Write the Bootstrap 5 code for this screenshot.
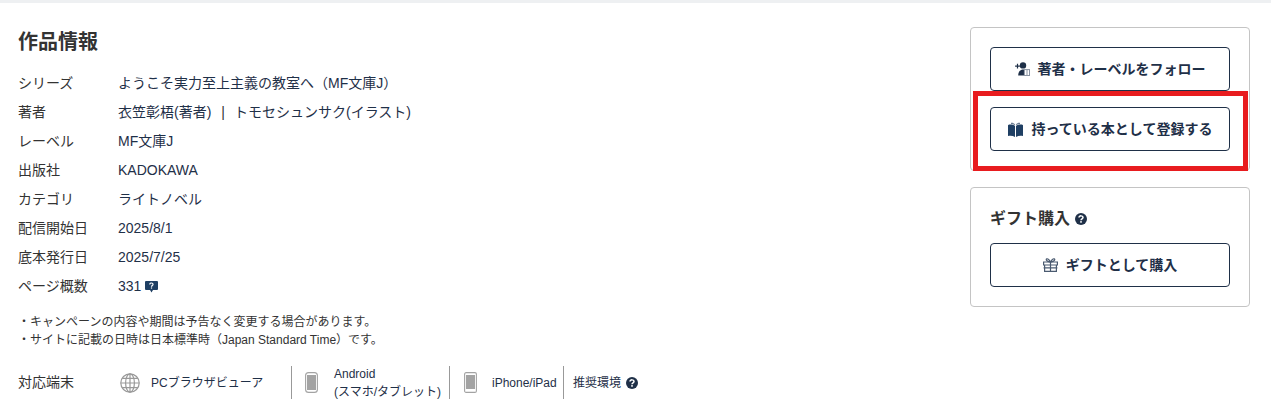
<!DOCTYPE html>
<html lang="ja">
<head>
  <meta charset="UTF-8" />
  <meta name="viewport" content="width=device-width, initial-scale=1" />
  <title>作品情報</title>
  <link href="https://cdn.jsdelivr.net/npm/bootstrap@5.3.0/dist/css/bootstrap.min.css" rel="stylesheet">
  <style>
    body {
      font-family: "Liberation Sans", "Noto Sans CJK JP", sans-serif;
      font-size: 14px;
      color: #333;
      background: #fff;
      overflow: hidden;
    }
    .page-wrap {
      border-top: 3px solid #eef0f2;
      padding: 24px 21px 0 18px;
      gap: 20px;
    }
    .info-col { flex: 1; min-width: 0; padding-top: 1px; }
    .side-col { width: 280px; flex: none; }
    .info-title { font-size: 20px; font-weight: 700; line-height: 28px; margin: 0 0 12.6px; }
    .info-row { height: 29.1px; line-height: 29px; }
    .info-label { width: 100px; flex: none; }
    .info-val, .info-val a { color: #1f3048; text-decoration: none; }
    .info-sep { margin: 0 9px 0 10px; color: #333; }
    .info-notes { font-size: 12px; line-height: 18px; margin: 11.4px 0 0; color: #333; }
    .device-row { margin-top: 17px; height: 34px; }
    .device-item { font-size: 12px; color: #1f3048; line-height: 18px; height: 33px; }
    .device-item.ruled { border-right: 1px solid #999; }
    .device-pc { width: 174px; }
    .device-pc svg { margin: 0 11px 0 2px; }
    .device-android { width: 158px; padding-left: 13px; }
    .device-android svg { margin-right: 16px; }
    .device-ios { width: 114px; padding-left: 14px; }
    .device-ios svg { margin-right: 15px; }
    .device-env { padding-left: 9px; font-size: 12px; color: #1f3048; }
    .help-dot { margin-left: 5px; }
    .side-box {
      border: 1px solid #c4c4c4;
      border-radius: 4px;
      padding: 19px;
    }
    .side-box + .side-box { margin-top: 16px; }
    .side-btn {
      height: 44px;
      width: 100%;
      border: 1px solid #1f3048;
      border-radius: 4px;
      color: #1f3048;
      font-size: 14px;
      font-weight: 700;
      gap: 8px;
      padding: 0;
    }
    .side-btn + .side-btn { margin-top: 16px; gap: 9px; }
    .gift-title { font-size: 16px; font-weight: 700; color: #333; line-height: 22px; margin: 1px 0 13px; }
    .gift-btn { gap: 8px; }
    .mark-box {
      position: absolute;
      left: 973px;
      top: 91px;
      width: 275px;
      height: 80px;
      border: 5px solid #e81c1f;
      pointer-events: none;
    }
  </style>
</head>
<body>
  <div class="page-wrap d-flex align-items-start">
    <div class="info-col">
      <h2 class="info-title">作品情報</h2>
      <div class="info-row d-flex"><div class="info-label">シリーズ</div><div class="info-val"><a href="#">ようこそ実力至上主義の教室へ（MF文庫J）</a></div></div>
      <div class="info-row d-flex"><div class="info-label">著者</div><div class="info-val"><a href="#">衣笠彰梧(著者)</a><span class="info-sep">|</span><a href="#">トモセシュンサク(イラスト)</a></div></div>
      <div class="info-row d-flex"><div class="info-label">レーベル</div><div class="info-val"><a href="#">MF文庫J</a></div></div>
      <div class="info-row d-flex"><div class="info-label">出版社</div><div class="info-val"><a href="#">KADOKAWA</a></div></div>
      <div class="info-row d-flex"><div class="info-label">カテゴリ</div><div class="info-val"><a href="#">ライトノベル</a></div></div>
      <div class="info-row d-flex"><div class="info-label">配信開始日</div><div class="info-val">2025/8/1</div></div>
      <div class="info-row d-flex"><div class="info-label">底本発行日</div><div class="info-val">2025/7/25</div></div>
      <div class="info-row d-flex">
        <div class="info-label">ページ概数</div>
        <div class="info-val d-flex align-items-center">331
          <svg class="ms-1" width="13" height="12" viewBox="0 0 13 12"><path fill="#1f3f63" d="M1 0h11a1 1 0 0 1 1 1v7a1 1 0 0 1-1 1H8l-1.5 2.5L5 9H1a1 1 0 0 1-1-1V1a1 1 0 0 1 1-1z"/><path fill="none" stroke="#fff" stroke-width="1.2" d="M4.8 3.4c0-2 3.4-1.7 3.2 0 0 1.1-1.5 1.1-1.5 2.3"/><rect x="5.9" y="6.4" width="1.2" height="1.2" fill="#fff"/></svg>
        </div>
      </div>
      <p class="info-notes">・キャンペーンの内容や期間は予告なく変更する場合があります。<br>・サイトに記載の日時は日本標準時（Japan Standard Time）です。</p>
      <div class="device-row d-flex align-items-center">
        <div class="info-label">対応端末</div>
        <div class="device-item ruled device-pc d-flex align-items-center">
          <svg width="20" height="20" viewBox="0 0 20 20" fill="none" stroke="#999" stroke-width="1.2"><circle cx="10" cy="10" r="9.2"/><ellipse cx="10" cy="10" rx="4.4" ry="9.2"/><path d="M10 .8v18.4M.8 10h18.4M2.2 5.3h15.6M2.2 14.7h15.6"/></svg>
          <span>PCブラウザビューア</span>
        </div>
        <div class="device-item ruled device-android d-flex align-items-center">
          <svg width="13" height="21" viewBox="0 0 13 21"><rect x=".6" y=".6" width="11.8" height="19.8" rx="3" fill="#fff" stroke="#a3a3a3" stroke-width="1.1"/><rect x="2" y="3" width="9" height="15" fill="#a3a3a3"/></svg>
          <span class="text-nowrap">Android<br>(スマホ/タブレット)</span>
        </div>
        <div class="device-item ruled device-ios d-flex align-items-center">
          <svg width="13" height="21" viewBox="0 0 13 21"><rect x=".6" y=".6" width="11.8" height="19.8" rx="1.5" fill="#fff" stroke="#a3a3a3" stroke-width="1.1"/><rect x="2" y="3" width="9" height="14" fill="#a3a3a3"/></svg>
          <span>iPhone/iPad</span>
        </div>
        <div class="device-env d-flex align-items-center">推奨環境
          <svg class="help-dot" width="12" height="12" viewBox="0 0 12 12"><circle cx="6" cy="6" r="6" fill="#1f3048"/><path fill="none" stroke="#fff" stroke-width="1.5" d="M4 4.6c0-2.4 4-2.2 4 0 0 1.4-2 1.3-2 2.7"/><rect x="5.2" y="8.1" width="1.6" height="1.6" fill="#fff"/></svg>
        </div>
      </div>
    </div>
    <div class="side-col">
      <div class="side-box">
        <button type="button" class="btn side-btn d-flex align-items-center justify-content-center">
          <svg width="15" height="14" viewBox="0 0 15 14"><path fill="#1f3048" d="M1.9 1.8h1.2V3.6h1.8v1.2H3.100V6.600H1.900V4.800H.1V3.600h1.800z"/><circle cx="8" cy="3.400" r="3.200" fill="#1f3048"/><path fill="#1f3048" d="M3.200 13.500c0-3.800 2-6 5-6 .6 0 1 .1 1 .1v5.900z"/><rect x="9.400" y="7.600" width="5.100" height="5.900" fill="#fff" stroke="#8a94a3"/><path stroke="#8a94a3" d="M12 7.600v5.900"/></svg>
          <span>著者・レーベルをフォロー</span>
        </button>
        <button type="button" class="btn side-btn d-flex align-items-center justify-content-center">
          <svg width="15" height="15" viewBox="0 0 15 15"><path fill="#1f3f63" d="M0 3.200V14c2.600-.6 4.900-.3 7 1V4C5.500 2.600 3 2.300 1 2.600zM15 3.200V14c-2.600-.6-4.900-.3-7 1V4c1.500-1.400 4-1.700 6-1.400z"/><path fill="#6b7c92" d="M3 .8C4.800.6 6.200 1.300 7 2.500v1C6 2.300 4.600 1.800 3 1.900zM12 .8C10.200.6 8.800 1.300 8 2.500v1c1-1.200 2.400-1.700 4-1.600z"/></svg>
          <span>持っている本として登録する</span>
        </button>
      </div>
      <div class="side-box">
        <div class="gift-title d-flex align-items-center">ギフト購入
          <svg class="help-dot" width="12" height="12" viewBox="0 0 12 12"><circle cx="6" cy="6" r="6" fill="#1f3048"/><path fill="none" stroke="#fff" stroke-width="1.5" d="M4 4.6c0-2.400 4-2.200 4 0 0 1.400-2 1.300-2 2.700"/><rect x="5.200" y="8.100" width="1.600" height="1.600" fill="#fff"/></svg>
        </div>
        <button type="button" class="btn side-btn gift-btn d-flex align-items-center justify-content-center">
          <svg width="15" height="14" viewBox="0 0 15 14" fill="none" stroke="#4a5a70" stroke-width="1.2"><path d="M.6 4h13.800v3H.6zM1.600 7h11.800v6.400H1.600zM7.500 4v9.400M.6 9.800h13.800"/><path d="M7.500 4C6 1 3.600 0 3.200 1.400 3 2.800 5.400 3.800 7.500 4zM7.500 4c1.500-3 3.900-4 4.300-2.600.2 1.400-2.200 2.400-4.300 2.600z"/></svg>
          <span>ギフトとして購入</span>
        </button>
      </div>
    </div>
  </div>
  <div class="mark-box"></div>
  <script src="https://cdn.jsdelivr.net/npm/bootstrap@5.3.0/dist/js/bootstrap.bundle.min.js"></script>
</body>
</html>
